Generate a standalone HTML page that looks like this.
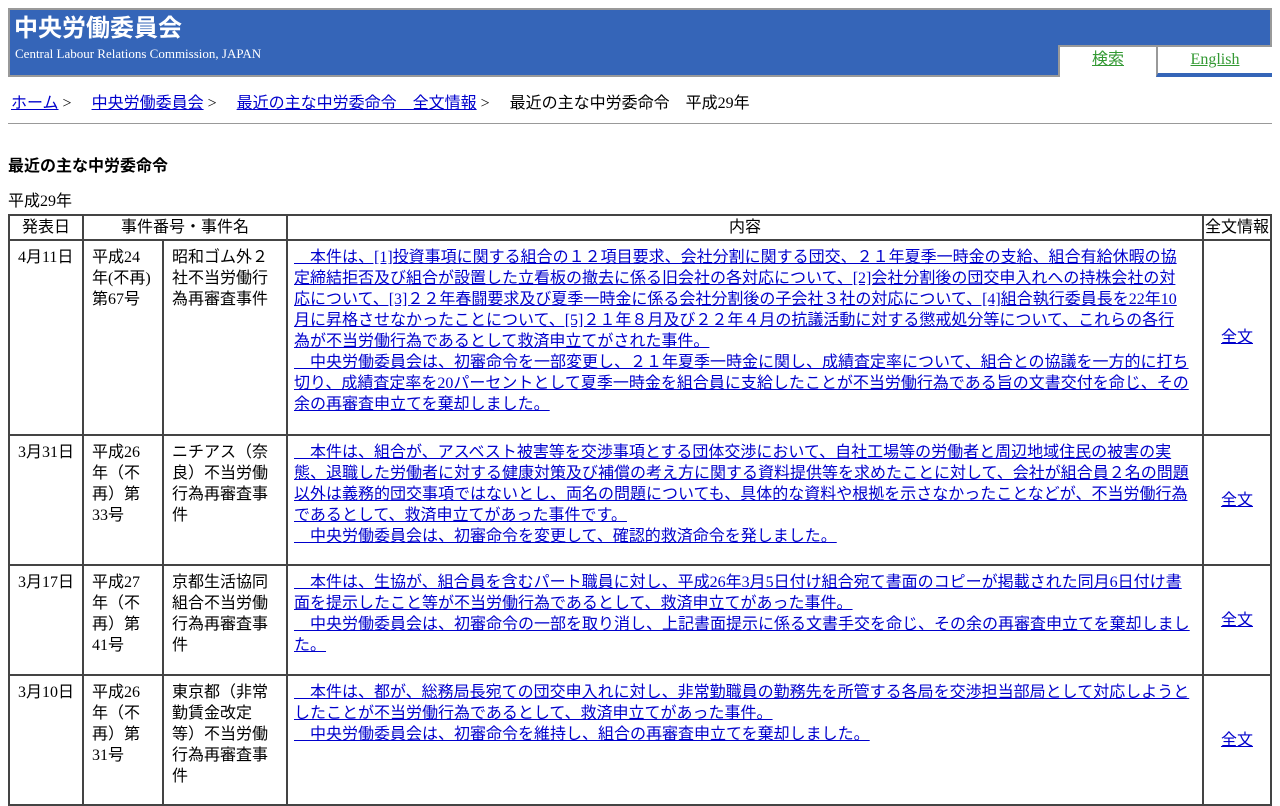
<!DOCTYPE html>
<html><head><meta charset="utf-8"><style>
body{margin:0;font-family:"Liberation Serif","Noto Sans CJK JP",serif;font-size:16px;color:#000;background:#fff}
a{color:#00c}
#hd{position:absolute;left:8px;top:8px;width:1260px;height:65px;background:#3565b8;border:2px solid #999}
#hd h1{position:absolute;left:4px;top:4px;margin:0;font-size:24px;font-family:"Liberation Sans","Noto Sans CJK JP",sans-serif;color:#fff;font-weight:bold;line-height:30px}
#hd .sub{position:absolute;left:5px;top:36px;font-size:13px;color:#fff}
.tab{position:absolute;top:35px;height:30px;background:#fff;border-left:2px solid #999;border-top:2px solid #999;text-align:center;line-height:26px}
.tab a{color:#339933;font-size:16px}
#bc{position:absolute;left:11px;top:94px;line-height:20px}
#bc span{margin-right:16px}
hr{position:absolute;left:8px;top:123px;width:1264px;margin:0;border:0;border-top:1px solid #999;}
h2{position:absolute;left:8px;top:157px;margin:0;font-size:16px;font-family:"Liberation Sans","Noto Sans CJK JP",sans-serif;line-height:20px}
#yr{position:absolute;left:8px;top:192px;line-height:20px}
table{position:absolute;left:8px;top:214px;border-collapse:collapse;width:1264px}
td,th{border:2px solid #444;font-weight:normal;vertical-align:top;line-height:21px;padding:6px 8px 10px}
th{padding:1px 1px;text-align:center;line-height:21px;white-space:nowrap}
td.c{white-space:nowrap;padding:6px 6px}
td.f{vertical-align:middle;text-align:center;padding:0}
</style></head><body>
<div id="hd"><h1>中央労働委員会</h1><div class="sub">Central Labour Relations Commission, JAPAN</div>
<div class="tab" style="left:1048px;width:96px"><a href="#">検索</a></div>
<div class="tab" style="left:1146px;width:114px;border-bottom:4px solid #3565b8;height:26px"><a href="#">English</a></div></div>
<div id="bc"><a href="#">ホーム</a><span> &gt;</span> <a href="#">中央労働委員会</a><span> &gt;</span> <a href="#">最近の主な中労委命令　全文情報</a><span> &gt;</span> 最近の主な中労委命令　平成29年</div>
<hr>
<h2>最近の主な中労委命令</h2>
<div id="yr">平成29年</div>
<table>
<tr style="height:24px"><th style="width:70px">発表日</th><th colspan="2">事件番号・事件名</th><th>内容</th><th style="width:64px">全文情報</th></tr>
<tr style="height:195px"><td style="width:56px;padding-left:8px">4月11日</td><td style="width:62px">平成24<br>年(不再)<br>第67号</td><td style="width:106px">昭和ゴム外２<br>社不当労働行<br>為再審査事件</td><td class="c"><a href="#">　本件は、[1]投資事項に関する組合の１２項目要求、会社分割に関する団交、２１年夏季一時金の支給、組合有給休暇の協<br>定締結拒否及び組合が設置した立看板の撤去に係る旧会社の各対応について、[2]会社分割後の団交申入れへの持株会社の対<br>応について、[3]２２年春闘要求及び夏季一時金に係る会社分割後の子会社３社の対応について、[4]組合執行委員長を22年10<br>月に昇格させなかったことについて、[5]２１年８月及び２２年４月の抗議活動に対する懲戒処分等について、これらの各行<br>為が不当労働行為であるとして救済申立てがされた事件。<br>　中央労働委員会は、初審命令を一部変更し、２１年夏季一時金に関し、成績査定率について、組合との協議を一方的に打ち<br>切り、成績査定率を20パーセントとして夏季一時金を組合員に支給したことが不当労働行為である旨の文書交付を命じ、その<br>余の再審査申立てを棄却しました。</a></td><td class="f"><a href="#">全文</a></td></tr>
<tr style="height:130px"><td>3月31日</td><td>平成26<br>年（不<br>再）第<br>33号</td><td>ニチアス（奈<br>良）不当労働<br>行為再審査事<br>件</td><td class="c"><a href="#">　本件は、組合が、アスベスト被害等を交渉事項とする団体交渉において、自社工場等の労働者と周辺地域住民の被害の実<br>態、退職した労働者に対する健康対策及び補償の考え方に関する資料提供等を求めたことに対して、会社が組合員２名の問題<br>以外は義務的団交事項ではないとし、両名の問題についても、具体的な資料や根拠を示さなかったことなどが、不当労働行為<br>であるとして、救済申立てがあった事件です。<br>　中央労働委員会は、初審命令を変更して、確認的救済命令を発しました。</a></td><td class="f"><a href="#">全文</a></td></tr>
<tr style="height:110px"><td>3月17日</td><td>平成27<br>年（不<br>再）第<br>41号</td><td>京都生活協同<br>組合不当労働<br>行為再審査事<br>件</td><td class="c"><a href="#">　本件は、生協が、組合員を含むパート職員に対し、平成26年3月5日付け組合宛て書面のコピーが掲載された同月6日付け書<br>面を提示したこと等が不当労働行為であるとして、救済申立てがあった事件。<br>　中央労働委員会は、初審命令の一部を取り消し、上記書面提示に係る文書手交を命じ、その余の再審査申立てを棄却しまし<br>た。</a></td><td class="f"><a href="#">全文</a></td></tr>
<tr style="height:130px"><td>3月10日</td><td>平成26<br>年（不<br>再）第<br>31号</td><td>東京都（非常<br>勤賃金改定<br>等）不当労働<br>行為再審査事<br>件</td><td class="c"><a href="#">　本件は、都が、総務局長宛ての団交申入れに対し、非常勤職員の勤務先を所管する各局を交渉担当部局として対応しようと<br>したことが不当労働行為であるとして、救済申立てがあった事件。<br>　中央労働委員会は、初審命令を維持し、組合の再審査申立てを棄却しました。</a></td><td class="f"><a href="#">全文</a></td></tr>
</table>
</body></html>
